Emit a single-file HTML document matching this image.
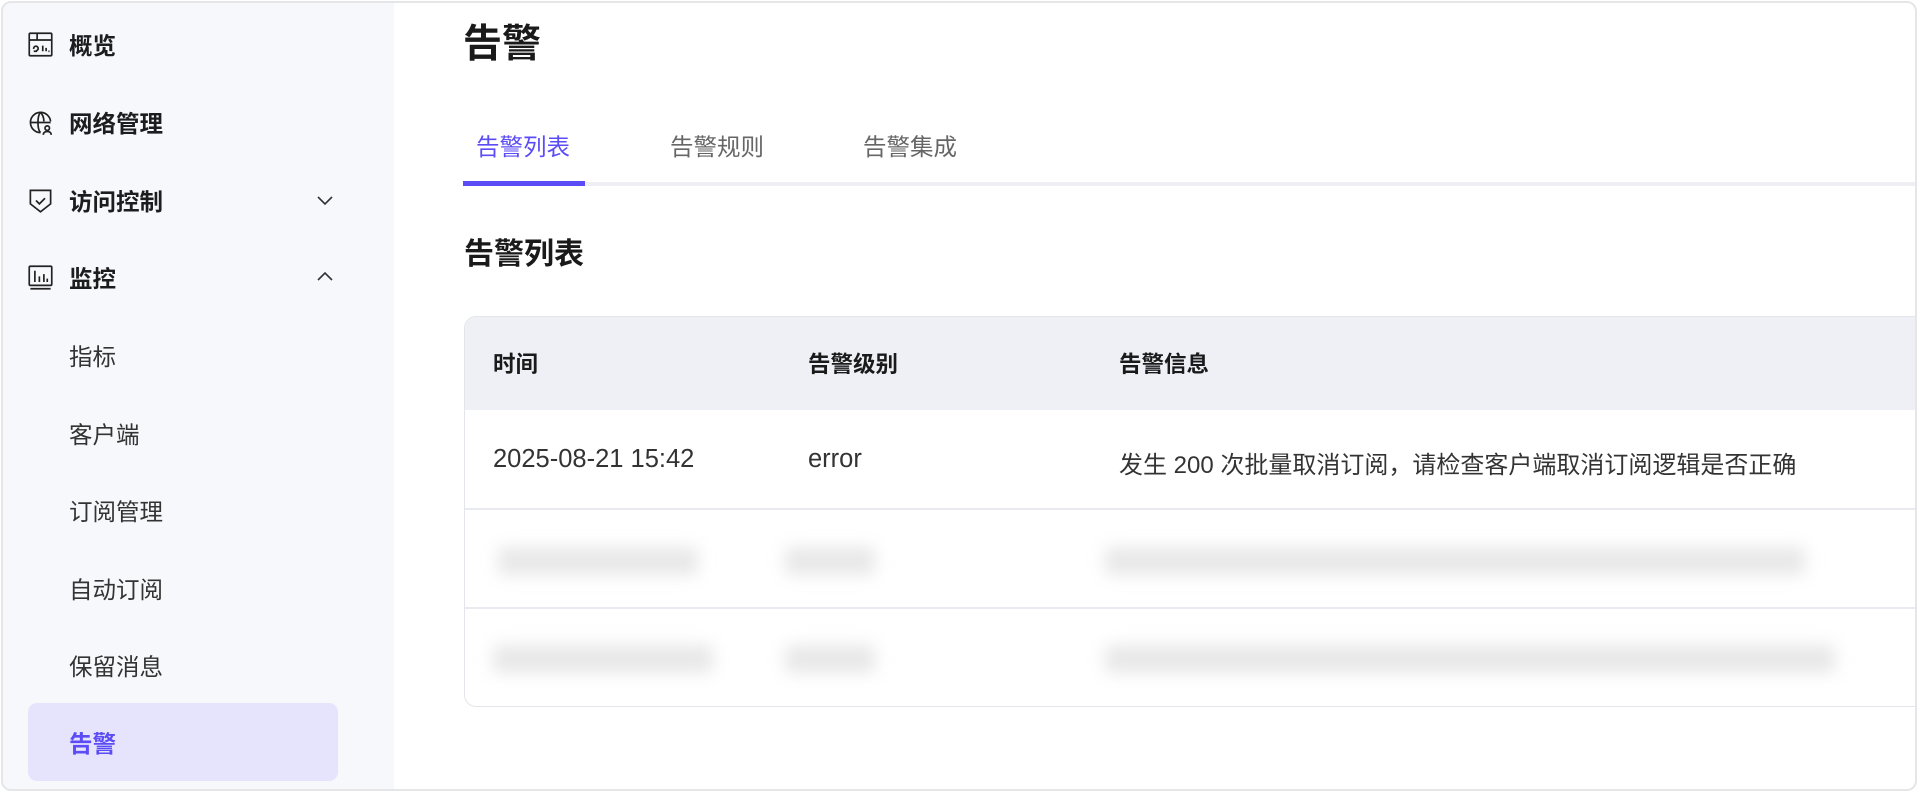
<!DOCTYPE html>
<html><head><meta charset="utf-8">
<style>
*{margin:0;padding:0;box-sizing:border-box}
html,body{width:1920px;height:795px;overflow:hidden;background:#fff;font-family:"Liberation Sans","Noto Sans CJK SC",sans-serif}
.frame{position:absolute;left:1px;top:1px;width:1916px;height:790px;border:2px solid #e6e6e8;border-radius:10px;overflow:hidden;background:#fff}
.side{position:absolute;left:0;top:0;width:391px;height:100%;background:#f7f8fc}
.item{position:absolute;left:0;width:391px;height:40px;display:flex;align-items:center;font-size:23.5px;color:#1d1d1f}
.item .ic{position:absolute;left:24px;top:7px;width:27px;height:27px}
.item .t{position:absolute;left:66px;font-weight:700}
.item .s{position:absolute;left:66px;color:#333}
.chev{position:absolute;left:313px;top:13px}
.active{position:absolute;left:25px;top:700px;width:310px;height:78px;background:#e6e3fd;border-radius:9px}
.abs{position:absolute;white-space:nowrap}
.blur{position:absolute;filter:blur(8px);background:#e8e8e8;height:28px;border-radius:4px}
</style></head><body>
<div class="frame">
<div class="side">
  <div class="item" style="top:21px">
    <svg class="ic" viewBox="0 0 24 24" fill="none" stroke="#222" stroke-width="1.5"><rect x="2" y="2" width="20" height="20" rx="1"/><path d="M2 8h20M9 2v6M6 16a2 2 0 1 1 2 1.5M6 18h3M14 13v5M17 15v3M19 18h1"/></svg>
    <span class="t">概览</span></div>
  <div class="item" style="top:99px">
    <svg class="ic" viewBox="0 0 24 24" fill="none" stroke="#222" stroke-width="1.5"><path d="M21 11a9 9 0 1 0-9 10"/><path d="M3 12h18M12 3c-3 3-3 15 0 18M12 3c3 3 3 7 3 8"/><circle cx="18" cy="17" r="2"/><path d="M14.5 23c0-2 1.5-3 3.5-3s3.5 1 3.5 3"/></svg>
    <span class="t">网络管理</span></div>
  <div class="item" style="top:177px">
    <svg class="ic" viewBox="0 0 24 24" fill="none" stroke="#222" stroke-width="1.5"><path d="M3 3h18v12l-9 7-9-7z"/><path d="M8 12l3 3 5-5"/></svg>
    <span class="t">访问控制</span>
    <svg class="chev" width="18" height="14" viewBox="0 0 18 14" fill="none" stroke="#333" stroke-width="1.6"><path d="M2 4l7 7 7-7"/></svg></div>
  <div class="item" style="top:254px">
    <svg class="ic" viewBox="0 0 24 24" fill="none" stroke="#222" stroke-width="1.5"><rect x="2" y="2" width="20" height="17" rx="1"/><path d="M3 22h18M7 6v10M11 11v5M15 9v7M18 13v3"/></svg>
    <span class="t">监控</span>
    <svg class="chev" width="18" height="14" viewBox="0 0 18 14" fill="none" stroke="#333" stroke-width="1.6"><path d="M2 10l7-7 7 7"/></svg></div>
  <div class="item" style="top:332px"><span class="s">指标</span></div>
  <div class="item" style="top:410px"><span class="s">客户端</span></div>
  <div class="item" style="top:487px"><span class="s">订阅管理</span></div>
  <div class="item" style="top:565px"><span class="s">自动订阅</span></div>
  <div class="item" style="top:642px"><span class="s">保留消息</span></div>
  <div class="active"></div>
  <div class="item" style="top:719px"><span class="s" style="color:#5b4cf5;font-weight:700">告警</span></div>
</div>

<div class="abs" style="left:460px;top:10px;font-size:39px;font-weight:700;color:#1a1a1a">告警</div>
<div class="abs" style="left:473px;top:125px;font-size:23.5px;color:#5b4cf5">告警列表</div>
<div class="abs" style="left:667px;top:125px;font-size:23.5px;color:#666">告警规则</div>
<div class="abs" style="left:860px;top:125px;font-size:23.5px;color:#666">告警集成</div>
<div class="abs" style="left:460px;top:179px;width:1460px;height:4px;background:#eeeef3"></div>
<div class="abs" style="left:460px;top:178px;width:122px;height:5px;background:#5b4cf5"></div>
<div class="abs" style="left:461px;top:226px;font-size:30px;font-weight:700;color:#1a1a1a">告警列表</div>

<div class="abs" style="left:461px;top:313px;width:1470px;height:391px;border:1.5px solid #e3e5ea;border-radius:12px;overflow:hidden">
  <div style="position:absolute;left:0;top:0;width:100%;height:93px;background:#eff0f5"></div>
  <div style="position:absolute;left:0;top:191px;width:100%;height:1.5px;background:#e8eaf0"></div>
  <div style="position:absolute;left:0;top:290px;width:100%;height:1.5px;background:#e8eaf0"></div>
  <div class="abs" style="left:28px;top:30px;font-size:22.5px;font-weight:700;color:#1a1a1a">时间</div>
  <div class="abs" style="left:343px;top:30px;font-size:22.5px;font-weight:700;color:#1a1a1a">告警级别</div>
  <div class="abs" style="left:654px;top:30px;font-size:22.5px;font-weight:700;color:#1a1a1a">告警信息</div>
  <div class="abs" style="left:28px;top:128px;font-size:25.5px;color:#333">2025-08-21 15:42</div>
  <div class="abs" style="left:343px;top:128px;font-size:25.5px;color:#333">error</div>
  <div class="abs" style="left:654px;top:128px;font-size:24px;color:#333">发生 200 次批量取消订阅，请检查客户端取消订阅逻辑是否正确</div>
  <div class="blur" style="left:33px;top:230px;width:200px"></div>
  <div class="blur" style="left:320px;top:230px;width:90px"></div>
  <div class="blur" style="left:640px;top:230px;width:700px"></div>
  <div class="blur" style="left:28px;top:328px;width:220px"></div>
  <div class="blur" style="left:320px;top:328px;width:90px"></div>
  <div class="blur" style="left:640px;top:328px;width:730px"></div>
</div>
</div>
</body></html>
